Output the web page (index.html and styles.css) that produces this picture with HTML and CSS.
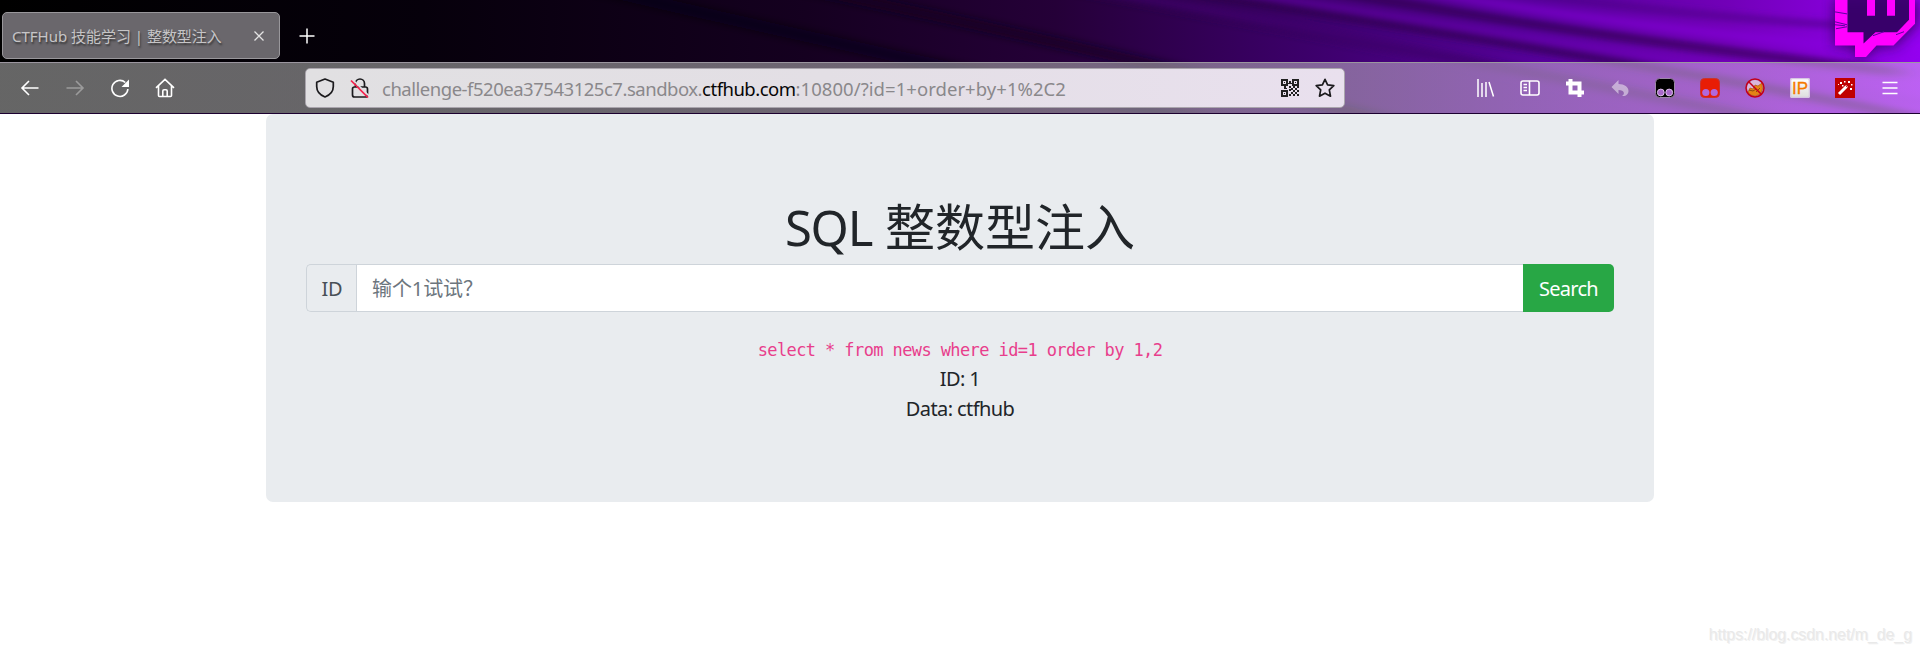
FILE: index.html
```html
<!DOCTYPE html>
<html lang="zh-CN">
<head>
<meta charset="utf-8">
<title>CTFHub 技能学习 | 整数型注入</title>
<link rel="stylesheet" href="styles.css">
</head>
<body>
<header class="browser">
  <svg class="theme" viewBox="0 0 1920 114" preserveAspectRatio="none" aria-hidden="true">
    <defs>
      <linearGradient id="base" x1="0" x2="1" y1="0" y2="0">
        <stop offset="0" stop-color="#000"/><stop offset=".22" stop-color="#06000b"/><stop offset=".42" stop-color="#150020"/><stop offset=".55" stop-color="#250038"/><stop offset=".68" stop-color="#3c006a"/><stop offset=".8" stop-color="#56009a"/><stop offset=".9" stop-color="#7200b8"/><stop offset="1" stop-color="#9400f0"/>
      </linearGradient>
      <filter id="soft" x="-10%" y="-50%" width="120%" height="200%"><feGaussianBlur stdDeviation="12 3"/></filter>
      <filter id="glow" x="-50%" y="-50%" width="200%" height="200%"><feGaussianBlur stdDeviation="7"/></filter>
    </defs>
    <rect width="1920" height="114" fill="url(#base)"/>
    <g filter="url(#soft)" fill="none">
      <path d="M560 -20Q900 60 1240 130" stroke="#09000f" stroke-width="12" opacity=".55"/>
      <path d="M740 -25Q1060 40 1420 130" stroke="#12001b" stroke-width="10" opacity=".7"/>
      <path d="M980 -30Q1300 30 1560 80T1800 130" stroke="#1e0033" stroke-width="9" opacity=".6"/>
      <path d="M1040 -20Q1350 35 1720 120" stroke="#6000a5" stroke-width="7" opacity=".4"/>
      <path d="M1120 -20Q1400 24 1620 62T1960 130" stroke="#250042" stroke-width="9" opacity=".75"/>
      <path d="M1200 -15Q1450 25 1960 110" stroke="#7900ca" stroke-width="7" opacity=".45"/>
      <path d="M1270 -20Q1500 22 1700 48T1900 72" stroke="#2d004c" stroke-width="9" opacity=".7"/>
      <path d="M1390 -15Q1600 26 1900 52" stroke="#8900df" stroke-width="10" opacity=".5"/>
      <path d="M1480 -15Q1650 14 1850 26" stroke="#480080" stroke-width="7" opacity=".6"/>
    </g>
    <path d="M1835 0H1917V24L1894 46H1876L1866 57H1855V46H1835Z" fill="#26004a" opacity=".85" filter="url(#glow)"/>
    <path d="M1847 0H1909V20L1897 32H1876L1864 44V32H1847Z" fill="#38006c" opacity=".9"/>
    <path d="M1835 0H1847.500V32.500H1863.500V44L1875.500 32.500H1897L1909 20V0H1915V24L1893.500 46H1876.500L1866 57.500H1855V46H1835ZM1867 0H1875V16H1867ZM1887 0H1895V16H1887Z" fill="#f0f"/>
    <path d="M1835 12L1847 14M1835 22L1847 25M1835 25L1845 26M1836 29L1847 27M1873 36L1884 32M1896 35L1904 32" stroke="#5c00a0" stroke-width="1" fill="none"/>
  </svg>

  <div class="tabs">
    <div class="tab">
      <span class="tab-title">CTFHub 技能学习 | 整数型注入</span>
      <svg class="tab-close" width="12" height="12" viewBox="0 0 12 12"><path d="M1.500 1.500l9 9M10.500 1.500l-9 9"/></svg>
    </div>
    <svg class="new-tab" width="16" height="16" viewBox="0 0 16 16"><path d="M8 .5v15M.5 8h15"/></svg>
  </div>

  <div class="toolbar">
    <div class="nav">
      <svg class="ico" viewBox="0 0 20 20"><path d="M18.500 10H2M9 3L2 10l7 7"/></svg>
      <svg class="ico dim" viewBox="0 0 20 20"><path d="M1.500 10H18M11 3l7 7-7 7"/></svg>
      <svg class="ico" viewBox="0 0 20 20"><path d="M17.900 11a8 8 0 1 1-2.600-6.500"/><path class="solid" d="M19 1.500v7.500h-7.500z"/></svg>
      <svg class="ico" viewBox="0 0 20 20"><path d="M1 9.800L10 1.300l9 8.500M3.500 8v9.500q0 1 1 1h11q1 0 1-1V8M7.800 18v-5q0-1.200 1.200-1.200h2q1.200 0 1.200 1.200v5"/></svg>
    </div>

    <div class="address">
      <svg class="ico dark" viewBox="0 0 20 20"><path d="M10 1l8.300 3.300v4.200c0 5-3.800 8.700-8.300 10.500C5.500 17.200 1.700 13.500 1.700 8.500V4.300z"/></svg>
      <svg class="ico dark lock" viewBox="0 0 20 20"><path d="M5.500 9V5.500a4.500 4.500 0 0 1 9 0V9M4.500 9h11q2 0 2 2v6q0 2-2 2h-11q-2 0-2-2v-6q0-2 2-2z"/><path class="gap" d="M2.500 1.500l17 17"/><path class="slash" d="M1 2.500l17 17"/></svg>
      <div class="url"><span class="u1">challenge-f520ea37543125c7.sandbox.</span><b class="u2">ctfhub.com</b><span class="u3">:10800/?id=1+order+by+1%2C2</span></div>
      <svg class="qr" width="18" height="18" viewBox="0 0 18 18" shape-rendering="crispEdges"><path fill-rule="evenodd" d="M0 0h7v7H0zM2 2v3h3V2zM11 0h7v7h-7zM13 2v3h3V2zM0 11h7v7H0zM2 13v3h3v-3z"/><path d="M3 3h1v1H3zM14 3h1v1h-1zM3 14h1v1H3zM8 2h2v2H8zM7 4h4v1H7zM3 7h2v2H3zM3 9h3v1H3zM8 7h2v2H8zM12 7h2v2h-2zM10 9h2v2h-2zM14 9h2v2h-2zM16 7h2v2h-2zM8 10h2v2H8zM12 11h2v2h-2zM16 11h2v2h-2zM10 13h2v2h-2zM14 13h2v2h-2zM8 15h2v2H8zM12 15h2v2h-2zM16 15h2v2h-2z"/></svg>
      <svg class="ico dark star" viewBox="0 0 20 20"><path d="M10 1.300l2.600 5.500 6.200.8-4.500 4.300 1.200 6.300L10 15.200l-5.500 3 1.200-6.300L1.200 7.600l6.200-.8z"/></svg>
    </div>

    <div class="tools">
      <svg class="ico" viewBox="0 0 20 20"><path class="thick" d="M3 1v18M7 5v14M11 4v15M14 4l4.500 14.500"/></svg>
      <svg class="ico" viewBox="0 0 20 20"><rect x="1" y="3" width="18" height="14" rx="2"/><path d="M9.500 3v14M3.500 6.500h3.500M3.500 9.500h3.500M3.500 12.500h3.500"/></svg>
      <svg class="ico" viewBox="0 0 20 20"><path class="crop" d="M5.500 1v13.500H19M1 5.500h13.500V19"/></svg>
      <svg class="ico faded" viewBox="0 0 20 20"><path class="solid" d="M8.500 2v4c6 0 10 3 10 7 0 3-2.500 5.500-6.500 5 3-1.500 3-6-3.500-6v4L1.500 9z"/></svg>
      <svg class="ico" viewBox="0 0 20 20"><rect class="monkey" x=".5" y=".5" width="19" height="19" rx="4"/><circle class="eye" cx="5.800" cy="14.500" r="3.400"/><circle class="eye" cx="14.200" cy="14.500" r="3.400"/></svg>
      <svg class="ico" viewBox="0 0 20 20"><rect class="monkey red" x=".5" y=".5" width="19" height="19" rx="4"/><circle class="eye red" cx="5.800" cy="14.500" r="3.600"/><circle class="eye red" cx="14.200" cy="14.500" r="3.600"/></svg>
      <svg class="ico" viewBox="0 0 20 20"><circle cx="10" cy="10" r="8" fill="#d9b7da" stroke="none"/><path class="fox" d="M3 14l2-4 3 1 2-4 3 1 4-3 .5 6-2 5-5 2-5-1z"/><path d="M4 12l4 1 3-2M11 14l4-4" stroke="#8c4a10" stroke-width="1"/><circle class="ban" cx="10" cy="10" r="9"/><path class="ban" d="M3.700 3.700l12.600 12.600"/></svg>
      <svg class="ico" viewBox="0 0 20 20"><defs><linearGradient id="paper" x2="0" y2="1"><stop stop-color="#fff"/><stop offset="1" stop-color="#ddd"/></linearGradient></defs><rect x=".5" y=".5" width="19" height="19" rx="2" fill="url(#paper)" stroke="#d7c6e2"/><text class="ip" x="2" y="16.200">IP</text></svg>
      <svg class="ico" viewBox="0 0 20 20"><path fill="#c00000" stroke="none" d="M0 0h20v20H0z"/><path d="M4 16l8-8" stroke="#fff" stroke-width="3"/><path d="M10.500 7.500l2 2" stroke="#c00000" stroke-width=".8"/><path fill="#fff" stroke="none" d="M5 4h2v2H5zM9 3h1.500v1.500H9zM13 3h2v2h-2zM16 6h1.500v1.500H16zM15 10h2v2h-2zM7 7h1.500v1.500H7zM3 6h1v1H3z"/></svg>
      <svg class="ico" viewBox="0 0 20 20"><path d="M2.500 4.500h15M2.500 10h15M2.500 15.500h15"/></svg>
    </div>
  </div>
</header>

<main class="page">
  <section class="jumbotron">
    <h1 class="title"><span class="sql">SQL</span> 整数型注入</h1>
    <form class="group">
      <label class="addon" for="id">ID</label>
      <input class="field" id="id" type="text" placeholder="输个1试试？">
      <button class="search" type="button">Search</button>
    </form>
    <div class="result">
      <code class="query">select * from news where id=1 order by 1,2</code>
      <div class="row">ID: 1</div>
      <div class="row">Data: ctfhub</div>
    </div>
  </section>
</main>
<footer class="watermark">https://blog.csdn.net/m_de_g</footer>
</body>
</html>
```
FILE: styles.css
```css
* { box-sizing: border-box; }
body {
  margin: 0;
  height: 653px;
  display: flex;
  flex-direction: column;
  overflow: hidden;
  background: #fff;
  color: #212529;
  font: 20px/30px "Noto Sans", "Noto Sans CJK SC", sans-serif;
}
.browser { position: relative; height: 114px; flex: none; border-bottom: 1px solid #1c0030; }
.theme { position: absolute; left: 0; top: 0; width: 100%; height: 100%; z-index: -1; }

.tabs { display: flex; align-items: center; height: 62px; padding: 9px 0 0 2px; gap: 19px; }
.tab {
  display: flex; align-items: center; justify-content: space-between;
  width: 278px; height: 47px; padding: 0 14px 0 9px;
  border: 1px solid #99979b; border-radius: 5px; background: #6a676c;
}
.tab-title { font-size: 15px; line-height: 22px; color: #c6c5c7; text-shadow: 1px 2px 2px #333; white-space: nowrap; letter-spacing: -.02px; }
.tab-close, .new-tab { fill: none; stroke: #e4e4e4; stroke-width: 1.3; flex: none; }
.new-tab { stroke: #fff; stroke-width: 1.5; }

.toolbar {
  display: flex; align-items: center; height: 51px; padding: 0 20px;
  border-top: 1px solid #9b969f;
  background: linear-gradient(90deg, rgba(154,154,154,.66), rgba(174,174,174,.58) 60%, rgba(225,185,245,.52));
}
.nav { display: flex; gap: 25px; width: 285px; }
.ico { width: 20px; height: 20px; flex: none; fill: none; stroke: #fff; stroke-width: 1.6; }
.ico .solid { fill: #fff; stroke: none; }
.dim { opacity: .35; }
.faded { opacity: .48; }
.ico .thick { stroke-width: 1.5; }
.ico .crop { stroke-width: 4; }

.address {
  display: flex; align-items: center; width: 1040px; height: 40px; padding: 0 9px;
  border: 1px solid #aaa5ad; border-radius: 5px;
  background: linear-gradient(90deg, #e1e0e2, #e3dfe5 50%, #e9e0ee);
}
.dark { stroke: #1b1a1d; stroke-linejoin: round; stroke-width: 1.7; }
.lock { margin-left: 15px; }
.lock .gap { stroke: #e2e0e3; }
.lock .slash { stroke: #f5204b; stroke-width: 1.7; }
.url { flex: 1; margin-left: 12px; color: #8a888b; font-size: 18.5px; white-space: nowrap; padding-top: 1px; }
.url b { color: #050505; font-weight: 400; }
.u1 { letter-spacing: -.48px; }
.u2 { letter-spacing: -.5px; }
.u3 { letter-spacing: .05px; }
.qr { fill: #222; flex: none; }
.star { margin-left: 16px; }

.tools { display: flex; gap: 25px; margin-left: auto; }
.monkey { fill: #000; stroke: #9b88a5; stroke-width: 1; }
.monkey.red { fill: #e81d05; stroke: #c8342e; }
.eye { fill: #a968cb; stroke: #dfc5eb; stroke-width: 1; }
.eye.red { fill: #b168dc; stroke: none; }
.fox { fill: #e48413; stroke: #a95717; stroke-width: .7; }
.ban { stroke: #c40018; stroke-width: 1.5; }
.ip { font: 17px "Liberation Sans", sans-serif; fill: #f57a00; stroke: #f57a00; stroke-width: .3; }

.page { padding: 0 266px; }
.jumbotron {
  height: 388px; padding: 83px 40px 77px; border-radius: 7px;
  background: #e9ecef; text-align: center;
}
.title { margin: 0 0 7px; font-size: 50px; line-height: 60px; font-weight: 400; white-space: nowrap; }
.sql { font-size: 49px; letter-spacing: -1.2px; }
.group { display: flex; height: 48px; margin: 0 0 22px; }
.addon {
  width: 50px; border: 1px solid #ced4da; border-right: 0; border-radius: 5px 0 0 5px;
  line-height: 48px; color: #495057; padding-left: 1px; letter-spacing: -.3px;
}
.field {
  flex: 1; min-width: 0; padding: 2px 15px 0; border: 1px solid #ced4da; border-right: 0; border-radius: 0;
  background: #fff; color: #495057; font: inherit; letter-spacing: -.1px;
}
.field::placeholder { color: #6c757d; opacity: 1; }
.search {
  width: 91px; padding: 2px 0 0; border: 0; border-radius: 0 5px 5px 0;
  background: #28a745; color: #fff; font: inherit; letter-spacing: -.75px;
}
.query { display: block; color: #e83e8c; font: 17px/30px "DejaVu Sans Mono", monospace; letter-spacing: -.6px; padding-top: 1px; margin-bottom: -1px; }
.row { letter-spacing: -.6px; }
.watermark {
  align-self: flex-end; margin: auto 8px 8px 0;
  color: #e9e9e9; font: 16px/20px "Liberation Sans", sans-serif; letter-spacing: -.08px;
  text-shadow: 1px 1px 0 #f1f1f1;
}
```
